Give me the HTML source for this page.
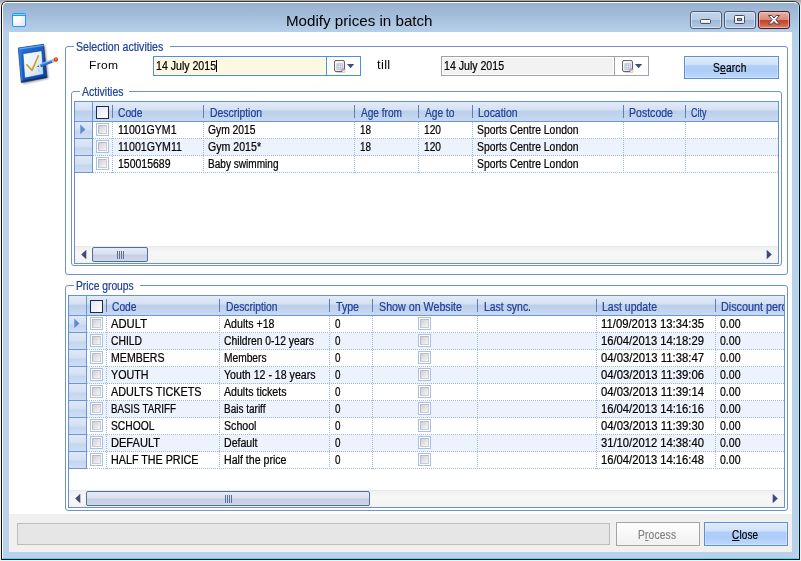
<!DOCTYPE html><html><head><meta charset="utf-8"><title>Modify prices in batch</title><style>
*,*:before,*:after{box-sizing:border-box;margin:0;padding:0}
html,body{width:801px;height:561px;overflow:hidden;background:#f2f2f2}
body{position:relative;font-family:"Liberation Sans",sans-serif;font-size:12px;color:#000}
.abs{position:absolute}
.t{position:absolute;white-space:nowrap;line-height:14px;transform-origin:0 0;display:block;-webkit-text-stroke:.22px currentColor}
#win{position:absolute;left:0;top:0;width:801px;height:561px;background:linear-gradient(#a9a9a9 0,#a9a9a9 1px,#f0f0f0 6px);overflow:hidden}
#frame{position:absolute;left:1px;top:1px;width:799px;height:559px;border:1px solid #101010;border-top-color:#33363c;border-radius:6px 6px 1px 1px;
 background:linear-gradient(#95b0d0 0px,#a5bedb 15px,#b7d0ea 31px,#b9d1ea 60px,#b9d1ea 100%);}
#frame2{position:absolute;left:2px;top:2px;width:797px;height:557px;border:1px solid #fff;border-right-color:#9be8f8;border-bottom-color:#3fdcfa;border-radius:5px 5px 1px 1px}
#client{position:absolute;left:9px;top:32px;width:783px;height:520px;background:#fff}
#bottom{position:absolute;left:0;top:482px;width:783px;height:38px;background:#f0f0f0}
.gb{position:absolute;border:1px solid #6b93cf;border-radius:3px}
.gbl{position:absolute;background:#fff;height:4px}
.grid{position:absolute;border:1px solid #6792d2;background:#fff;overflow:hidden}
.hdr{position:absolute;left:0;top:0;right:0;height:20px;background:linear-gradient(#e3ebf7 0%,#d4e0f2 42%,#bbcfea 48%,#c9d9f0 100%);border-bottom:1px solid #6b97d8}
.hdr i{position:absolute;top:3px;width:1px;height:13px;background:#5b7fc0}
.row{position:absolute;left:0;right:0;height:17px;border-bottom:1px dotted #9db8e2}
.row.alt{background:#edf3fc}
.ind{position:absolute;left:0;top:0;height:17px;background:linear-gradient(#dfe8f6 0%,#d5e1f3 45%,#c4d6ee 60%,#d0def2 100%);border-right:1px solid #6b97d8;border-bottom:1px solid #6b97d8}
.vl{position:absolute;width:0;border-left:1px dotted #9db8e2}
.cb{position:absolute;width:13px;height:13px;border:1px solid #a9c0e4;background:#fff;padding:0}
.cb:after{content:"";position:absolute;left:1px;top:1px;width:9px;height:9px;border:1px solid #b7bbc5;border-right-color:#c9ccd3;border-bottom-color:#c9ccd3;background:linear-gradient(135deg,#d0d1d5,#f6f6f6)}
.hcb{position:absolute;width:13px;height:13px;border:1px solid #1f2a44;background:linear-gradient(135deg,#dfe6f3,#fff)}
.sb{position:absolute;left:0;right:0;height:17px;background:linear-gradient(#f0f0f0 0%,#f7f7f7 40%,#f3f3f3 100%);border-top:1px solid #e6e9ef}
.thumb{position:absolute;top:0px;height:15px;border:1px solid #566d99;border-radius:2px;background:linear-gradient(#e6ebf5 0%,#d9e0ee 48%,#c5cfe2 52%,#cfd8e8 100%)}
.grip{position:absolute;top:3px;width:7px;height:8px;background:repeating-linear-gradient(90deg,#5b6f96 0 1px,transparent 1px 2px)}
.btn{position:absolute;border:1px solid #5f8fd5;box-shadow:inset 0 0 0 1px rgba(255,255,255,.28)}
</style></head><body><div id="win"><div id="frame"></div><div id="frame2"></div><div class="abs" style="left:12px;top:13px;width:14px;height:14px;border:1px solid #1c9cff;border-radius:2px;background:radial-gradient(circle at 25% 35%,#fff 0,#fff 20%,#e4deff 100%)"><div class="abs" style="left:0;top:0;width:12px;height:2px;background:#1c9cff;border-top:1px solid #8ed0ff"></div></div><span class="t" style="left:285.5px;top:11.5px;font-size:15px;transform:scaleX(1.010);line-height:18px;-webkit-text-stroke:0;">Modify prices in batch</span><div class="abs" style="left:690px;top:11px;width:32px;height:18px;border:1px solid #4f5c73;border-radius:3px;box-shadow:inset 0 0 0 1px rgba(225,235,247,.75);background:linear-gradient(#c3d4ea 0%,#b9cce6 47%,#9db6d7 50%,#b3c9e5 100%)"><div class="abs" style="left:9px;top:7px;width:11px;height:5px;border:1px solid #474c5e;background:linear-gradient(#fff,#e4e4e4);border-radius:1.5px"></div></div><div class="abs" style="left:724px;top:11px;width:32px;height:18px;border:1px solid #4f5c73;border-radius:3px;box-shadow:inset 0 0 0 1px rgba(225,235,247,.75);background:linear-gradient(#c3d4ea 0%,#b9cce6 47%,#9db6d7 50%,#b3c9e5 100%)"><div class="abs" style="left:9px;top:3px;width:11px;height:9px;border:1px solid #474c5e;background:linear-gradient(#fff,#e4e4e4);border-radius:1.5px"><div class="abs" style="left:2px;top:2px;width:5px;height:3px;border:1px solid #474c5e;background:#8fa9cf"></div></div></div><div class="abs" style="left:758px;top:11px;width:32px;height:18px;border:1px solid #4a1822;border-radius:3px;box-shadow:inset 0 0 0 1px rgba(255,220,210,.55);background:linear-gradient(#e9b0a3 0%,#dc8c7b 47%,#c0432a 50%,#c9533a 70%,#dc8268 100%)"><svg class="abs" style="left:8px;top:2px" width="14" height="12" viewBox="0 0 14 12"><path d="M1.5 1.5 L4.8 1.5 L7 4 L9.2 1.5 L12.5 1.5 L8.8 5.8 L12.5 10 L9.2 10 L7 7.5 L4.8 10 L1.5 10 L5.2 5.8 Z" fill="#fff" stroke="#4a4350" stroke-width="1" stroke-linejoin="round"/></svg></div><div id="client"><div id="bottom"></div></div><svg class="abs" style="left:10px;top:36px" width="60" height="56" viewBox="10 36 60 56">
<defs><linearGradient id="g1" x1="0" y1="0" x2="1" y2="1"><stop offset="0" stop-color="#2a78e0"/><stop offset=".45" stop-color="#1a5cc4"/><stop offset="1" stop-color="#0b3a92"/></linearGradient>
<linearGradient id="g2" x1="0" y1="0" x2="1" y2="1"><stop offset="0" stop-color="#ffffff"/><stop offset=".45" stop-color="#eaf3fd"/><stop offset="1" stop-color="#b5d5f5"/></linearGradient>
<linearGradient id="g3" x1="0" y1="0" x2="0" y2="1"><stop offset="0" stop-color="#b5d8fb"/><stop offset=".45" stop-color="#3f87e4"/><stop offset="1" stop-color="#1a4fae"/></linearGradient>
<filter id="bl" x="-30%" y="-30%" width="160%" height="160%"><feGaussianBlur stdDeviation="1.2"/></filter></defs>
<path d="M19.5 49 L45 45.5 L48.5 78.5 L23 84 Z" fill="#5e4f30" opacity=".6" filter="url(#bl)"/>
<path d="M18.3 48 L43.5 44.3 L47 77.6 L21.3 82.5 Z" fill="url(#g1)" stroke="#0b2f78" stroke-width=".7" stroke-linejoin="round"/>
<path d="M18.6 48.3 L43.4 44.7 L43.6 46 L19 49.7 Z" fill="#5aa6f2"/>
<path d="M18.6 48.3 L19.9 48.2 L22.8 82 L21.5 82.2 Z" fill="#3b8ae6" opacity=".8"/>
<path d="M46 76 L46.8 77.5 L21.4 82.3 L21.2 80.8 Z" fill="#09296a" opacity=".7"/>
<path d="M23 53.7 L41.8 50.7 L43.5 74.2 L24.7 78.1 Z" fill="url(#g2)" stroke="#0d3f98" stroke-width=".6"/>
<path d="M26.8 64.8 L32 70.4 L38.4 55.8" fill="none" stroke="#d59b1f" stroke-width="1.6" stroke-linecap="round" stroke-linejoin="round"/>
<path d="M38.2 68 L40 71.5 L38.6 71.8 Z" fill="#7cc4f7" opacity=".8"/>
<g transform="rotate(-20.7 37.5 66.5)">
<path d="M41 66.5 L58 66.5" stroke="#5e4f30" stroke-width="3.6" opacity=".4" filter="url(#bl)" transform="translate(.6,1.8)"/>
<rect x="40.3" y="64.8" width="13" height="3.5" fill="url(#g3)"/>
<rect x="53.1" y="64.8" width="2.1" height="3.5" fill="#d4d9e4"/>
<rect x="53.8" y="64.8" width=".6" height="3.5" fill="#8b94a8"/>
<ellipse cx="57.1" cy="66.5" rx="2.3" ry="2.2" fill="#e0461b"/>
<ellipse cx="57.4" cy="65.9" rx="1" ry=".8" fill="#f58a5c"/>
<path d="M40.3 64.8 L37.3 66.5 L40.3 68.3 Z" fill="#efe0bd"/>
<path d="M38.8 65.7 L37.1 66.5 L38.8 67.4 Z" fill="#2b2b2b"/>
</g>
</svg><div class="gb" style="left:65px;top:46px;width:723px;height:229px"></div><div class="gbl" style="left:74px;top:44px;width:96px"></div><span class="t" style="left:75.8px;top:40px;font-size:12px;color:#20409a;transform:scaleX(0.884);">Selection activities</span><span class="t" style="left:88.9px;top:58.4px;font-size:11px;transform:scaleX(1.091);letter-spacing:.3px;-webkit-text-stroke:0;">From</span><span class="t" style="left:377.2px;top:58px;font-size:12px;transform:scaleX(1.084);letter-spacing:.3px;-webkit-text-stroke:0;">till</span><div class="abs" style="left:153px;top:56px;width:208px;height:20px;border:1px solid #4a8fe0;background:#fff"><div class="abs" style="left:1px;top:1px;width:170px;height:16px;background:#fff8e1"></div><div class="abs" style="left:172px;top:0;width:1px;height:18px;background:#4a8fe0"></div><span class="t" style="left:2px;top:2px;font-size:12px;transform:scaleX(0.882);">14 July 2015</span><div class="abs" style="left:62px;top:3px;width:1px;height:12px;background:#000"></div><svg class="abs" style="left:179px;top:2px" width="26" height="15" viewBox="0 0 26 15"><defs><linearGradient id="cg" x1="0" y1="0" x2="1" y2="1"><stop offset="0" stop-color="#fff"/><stop offset="1" stop-color="#dcdcec"/></linearGradient></defs><path d="M3.5 13.3 L11.8 13.3 L11.8 4" stroke="#b9b4b4" stroke-width="1" fill="none" opacity=".7"/><path d="M2.5 1.5 H10 Q11.5 1.5 11.5 3 V10 L9 12.5 H3 Q1.5 12.5 1.5 11 V3 Q1.5 1.5 3 1.5 Z" fill="url(#cg)" stroke="#6e6162" stroke-width="1"/><path d="M9 12.5 V10.5 Q9 10 9.5 10 H11.5" fill="#f4f4fa" stroke="#6e6162" stroke-width=".8"/><rect x="3.6" y="4.5" width="6" height="6" fill="#a4aecb"/><path d="M4.3 5.2h1.2v1.2h-1.2zM6 5.2h1.2v1.2h-1.2zM7.7 5.2h1.2v1.2h-1.2zM4.3 6.9h1.2v1.2h-1.2zM6 6.9h1.2v1.2h-1.2zM7.7 6.9h1.2v1.2h-1.2zM4.3 8.6h1.2v1.2h-1.2zM6 8.6h1.2v1.2h-1.2zM7.7 8.6h1.2v1.2h-1.2z" fill="#f3f5fb"/><path d="M14 5 L21.2 5 L17.6 9.2 Z" fill="#3c4f7c"/></svg></div><div class="abs" style="left:441px;top:56px;width:208px;height:20px;border:1px solid #a0a1a6;background:#fff"><div class="abs" style="left:1px;top:1px;width:170px;height:16px;background:#f2f2f2"></div><div class="abs" style="left:172px;top:0;width:1px;height:18px;background:#a0a1a6"></div><span class="t" style="left:2px;top:2px;font-size:12px;transform:scaleX(0.882);">14 July 2015</span><svg class="abs" style="left:179px;top:2px" width="26" height="15" viewBox="0 0 26 15"><defs><linearGradient id="cg" x1="0" y1="0" x2="1" y2="1"><stop offset="0" stop-color="#fff"/><stop offset="1" stop-color="#dcdcec"/></linearGradient></defs><path d="M3.5 13.3 L11.8 13.3 L11.8 4" stroke="#b9b4b4" stroke-width="1" fill="none" opacity=".7"/><path d="M2.5 1.5 H10 Q11.5 1.5 11.5 3 V10 L9 12.5 H3 Q1.5 12.5 1.5 11 V3 Q1.5 1.5 3 1.5 Z" fill="url(#cg)" stroke="#6e6162" stroke-width="1"/><path d="M9 12.5 V10.5 Q9 10 9.5 10 H11.5" fill="#f4f4fa" stroke="#6e6162" stroke-width=".8"/><rect x="3.6" y="4.5" width="6" height="6" fill="#a4aecb"/><path d="M4.3 5.2h1.2v1.2h-1.2zM6 5.2h1.2v1.2h-1.2zM7.7 5.2h1.2v1.2h-1.2zM4.3 6.9h1.2v1.2h-1.2zM6 6.9h1.2v1.2h-1.2zM7.7 6.9h1.2v1.2h-1.2zM4.3 8.6h1.2v1.2h-1.2zM6 8.6h1.2v1.2h-1.2zM7.7 8.6h1.2v1.2h-1.2z" fill="#f3f5fb"/><path d="M14 5 L21.2 5 L17.6 9.2 Z" fill="#3c4f7c"/></svg></div><div class="btn" style="left:684px;top:56px;width:95px;height:23px;background:linear-gradient(#e0ebfc 0%,#d0e1fa 37%,#b0cef8 41%,#adccf8 65%,#bed9fc 100%)"><span class="t" style="left:28.4px;top:4px;font-size:12px;transform:scaleX(0.855);letter-spacing:.2px;">S<u>e</u>arch</span></div><div class="gb" style="left:71px;top:91px;width:711px;height:175px"></div><div class="gbl" style="left:80px;top:89px;width:49px"></div><span class="t" style="left:82px;top:85px;font-size:12px;color:#20409a;transform:scaleX(0.877);">Activities</span><div class="grid" style="left:74px;top:101px;width:705px;height:163px"><div class="hdr"><div class="abs" style="left:0;top:0;width:18px;height:19px;border-right:1px solid #6b97d8"></div><b class="hcb" style="left:21px;top:4px"></b><i style="left:37px"></i><span class="t" style="left:43px;top:4px;font-size:12px;color:#20409a;transform:scaleX(0.854);">Code</span><i style="left:128px"></i><span class="t" style="left:134.5px;top:4px;font-size:12px;color:#20409a;transform:scaleX(0.866);">Description</span><i style="left:279px"></i><span class="t" style="left:285.5px;top:4px;font-size:12px;color:#20409a;transform:scaleX(0.842);">Age from</span><i style="left:343px"></i><span class="t" style="left:349.5px;top:4px;font-size:12px;color:#20409a;transform:scaleX(0.850);">Age to</span><i style="left:397px"></i><span class="t" style="left:403.3px;top:4px;font-size:12px;color:#20409a;transform:scaleX(0.871);">Location</span><i style="left:548px"></i><span class="t" style="left:554px;top:4px;font-size:12px;color:#20409a;transform:scaleX(0.879);">Postcode</span><i style="left:610px"></i><span class="t" style="left:616px;top:4px;font-size:12px;color:#20409a;transform:scaleX(0.750);">City</span></div><div class="row" style="top:20px"><div class="ind" style="width:18px"></div><svg class="abs" style="left:5px;top:2px" width="6" height="11" viewBox="0 0 6 11"><path d="M0.3 0.6 L5.4 5.4 L0.3 10.2 Z" fill="#5b8cd6"/></svg><b class="cb" style="left:21px;top:1px"></b><span class="t" style="left:43px;top:1px;font-size:12px;transform:scaleX(0.880);">11001GYM1</span><span class="t" style="left:133px;top:1px;font-size:12px;transform:scaleX(0.858);">Gym 2015</span><span class="t" style="left:285px;top:1px;font-size:12px;transform:scaleX(0.823);">18</span><span class="t" style="left:349px;top:1px;font-size:12px;transform:scaleX(0.849);">120</span><span class="t" style="left:401.9px;top:1px;font-size:12px;transform:scaleX(0.864);">Sports Centre London</span></div><div class="row alt" style="top:37px"><div class="ind" style="width:18px"></div><b class="cb" style="left:21px;top:1px"></b><span class="t" style="left:43px;top:1px;font-size:12px;transform:scaleX(0.885);">11001GYM11</span><span class="t" style="left:133px;top:1px;font-size:12px;transform:scaleX(0.883);">Gym 2015*</span><span class="t" style="left:285px;top:1px;font-size:12px;transform:scaleX(0.823);">18</span><span class="t" style="left:349px;top:1px;font-size:12px;transform:scaleX(0.849);">120</span><span class="t" style="left:401.9px;top:1px;font-size:12px;transform:scaleX(0.864);">Sports Centre London</span></div><div class="row" style="top:54px"><div class="ind" style="width:18px"></div><b class="cb" style="left:21px;top:1px"></b><span class="t" style="left:43px;top:1px;font-size:12px;transform:scaleX(0.874);">150015689</span><span class="t" style="left:133px;top:1px;font-size:12px;transform:scaleX(0.839);">Baby swimming</span><span class="t" style="left:401.9px;top:1px;font-size:12px;transform:scaleX(0.864);">Sports Centre London</span></div><div class="vl" style="left:37px;top:20px;height:51px"></div><div class="vl" style="left:128px;top:20px;height:51px"></div><div class="vl" style="left:279px;top:20px;height:51px"></div><div class="vl" style="left:343px;top:20px;height:51px"></div><div class="vl" style="left:397px;top:20px;height:51px"></div><div class="vl" style="left:548px;top:20px;height:51px"></div><div class="vl" style="left:610px;top:20px;height:51px"></div><div class="sb" style="top:144px"><svg class="abs" style="left:6px;top:2px" width="6" height="11" viewBox="0 0 6 11"><path d="M5.3 0.8 L0.2 5.5 L5.3 10.2 Z" fill="#3a4c78"/></svg><svg class="abs" style="right:6px;top:2px" width="6" height="11" viewBox="0 0 6 11"><path d="M0.7 0.8 L5.8 5.5 L0.7 10.2 Z" fill="#3a4c78"/></svg><div class="thumb" style="left:17px;width:56px"><div class="grip" style="left:24px"></div></div></div></div><div class="gb" style="left:65px;top:285px;width:723px;height:226px"></div><div class="gbl" style="left:74px;top:283px;width:66px"></div><span class="t" style="left:76.3px;top:279.2px;font-size:12px;color:#20409a;transform:scaleX(0.856);">Price groups</span><div class="grid" style="left:68px;top:295px;width:717px;height:213px"><div class="hdr"><div class="abs" style="left:0;top:0;width:18px;height:19px;border-right:1px solid #6b97d8"></div><b class="hcb" style="left:21px;top:4px"></b><i style="left:37px"></i><span class="t" style="left:42.5px;top:4px;font-size:12px;color:#20409a;transform:scaleX(0.854);">Code</span><i style="left:150px"></i><span class="t" style="left:157px;top:4px;font-size:12px;color:#20409a;transform:scaleX(0.858);">Description</span><i style="left:260px"></i><span class="t" style="left:267px;top:4px;font-size:12px;color:#20409a;transform:scaleX(0.884);">Type</span><i style="left:303px"></i><span class="t" style="left:309.5px;top:4px;font-size:12px;color:#20409a;transform:scaleX(0.891);">Show on Website</span><i style="left:408px"></i><span class="t" style="left:414.5px;top:4px;font-size:12px;color:#20409a;transform:scaleX(0.870);">Last sync.</span><i style="left:527px"></i><span class="t" style="left:533px;top:4px;font-size:12px;color:#20409a;transform:scaleX(0.877);">Last update</span><i style="left:646px"></i><span class="t" style="left:652px;top:4px;font-size:12px;color:#20409a;transform:scaleX(0.899);">Discount perc</span></div><div class="row" style="top:20px"><div class="ind" style="width:18px"></div><svg class="abs" style="left:5px;top:2px" width="6" height="11" viewBox="0 0 6 11"><path d="M0.3 0.6 L5.4 5.4 L0.3 10.2 Z" fill="#5b8cd6"/></svg><b class="cb" style="left:21px;top:1px"></b><span class="t" style="left:42px;top:1px;font-size:12px;transform:scaleX(0.936);">ADULT</span><span class="t" style="left:155px;top:1px;font-size:12px;transform:scaleX(0.885);">Adults +18</span><span class="t" style="left:265.5px;top:1px;font-size:12px;transform:scaleX(0.822);">0</span><b class="cb" style="left:349px;top:1px"></b><span class="t" style="left:531.6px;top:1px;font-size:12px;transform:scaleX(0.943);">11/09/2013 13:34:35</span><span class="t" style="left:651px;top:1px;font-size:12px;transform:scaleX(0.878);">0.00</span></div><div class="row alt" style="top:37px"><div class="ind" style="width:18px"></div><b class="cb" style="left:21px;top:1px"></b><span class="t" style="left:42px;top:1px;font-size:12px;transform:scaleX(0.861);">CHILD</span><span class="t" style="left:155px;top:1px;font-size:12px;transform:scaleX(0.859);">Children 0-12 years</span><span class="t" style="left:265.5px;top:1px;font-size:12px;transform:scaleX(0.822);">0</span><b class="cb" style="left:349px;top:1px"></b><span class="t" style="left:531.6px;top:1px;font-size:12px;transform:scaleX(0.935);">16/04/2013 14:18:29</span><span class="t" style="left:651px;top:1px;font-size:12px;transform:scaleX(0.878);">0.00</span></div><div class="row" style="top:54px"><div class="ind" style="width:18px"></div><b class="cb" style="left:21px;top:1px"></b><span class="t" style="left:42px;top:1px;font-size:12px;transform:scaleX(0.882);">MEMBERS</span><span class="t" style="left:155px;top:1px;font-size:12px;transform:scaleX(0.850);">Members</span><span class="t" style="left:265.5px;top:1px;font-size:12px;transform:scaleX(0.822);">0</span><b class="cb" style="left:349px;top:1px"></b><span class="t" style="left:531.6px;top:1px;font-size:12px;transform:scaleX(0.943);">04/03/2013 11:38:47</span><span class="t" style="left:651px;top:1px;font-size:12px;transform:scaleX(0.878);">0.00</span></div><div class="row alt" style="top:71px"><div class="ind" style="width:18px"></div><b class="cb" style="left:21px;top:1px"></b><span class="t" style="left:42px;top:1px;font-size:12px;transform:scaleX(0.893);">YOUTH</span><span class="t" style="left:155px;top:1px;font-size:12px;transform:scaleX(0.883);">Youth 12 - 18 years</span><span class="t" style="left:265.5px;top:1px;font-size:12px;transform:scaleX(0.822);">0</span><b class="cb" style="left:349px;top:1px"></b><span class="t" style="left:531.6px;top:1px;font-size:12px;transform:scaleX(0.943);">04/03/2013 11:39:06</span><span class="t" style="left:651px;top:1px;font-size:12px;transform:scaleX(0.878);">0.00</span></div><div class="row" style="top:88px"><div class="ind" style="width:18px"></div><b class="cb" style="left:21px;top:1px"></b><span class="t" style="left:42px;top:1px;font-size:12px;transform:scaleX(0.903);">ADULTS TICKETS</span><span class="t" style="left:155px;top:1px;font-size:12px;transform:scaleX(0.884);">Adults tickets</span><span class="t" style="left:265.5px;top:1px;font-size:12px;transform:scaleX(0.822);">0</span><b class="cb" style="left:349px;top:1px"></b><span class="t" style="left:531.6px;top:1px;font-size:12px;transform:scaleX(0.943);">04/03/2013 11:39:14</span><span class="t" style="left:651px;top:1px;font-size:12px;transform:scaleX(0.878);">0.00</span></div><div class="row alt" style="top:105px"><div class="ind" style="width:18px"></div><b class="cb" style="left:21px;top:1px"></b><span class="t" style="left:42px;top:1px;font-size:12px;transform:scaleX(0.817);">BASIS TARIFF</span><span class="t" style="left:155px;top:1px;font-size:12px;transform:scaleX(0.833);">Bais tariff</span><span class="t" style="left:265.5px;top:1px;font-size:12px;transform:scaleX(0.822);">0</span><b class="cb" style="left:349px;top:1px"></b><span class="t" style="left:531.6px;top:1px;font-size:12px;transform:scaleX(0.935);">16/04/2013 14:16:16</span><span class="t" style="left:651px;top:1px;font-size:12px;transform:scaleX(0.878);">0.00</span></div><div class="row" style="top:122px"><div class="ind" style="width:18px"></div><b class="cb" style="left:21px;top:1px"></b><span class="t" style="left:42px;top:1px;font-size:12px;transform:scaleX(0.858);">SCHOOL</span><span class="t" style="left:155px;top:1px;font-size:12px;transform:scaleX(0.885);">School</span><span class="t" style="left:265.5px;top:1px;font-size:12px;transform:scaleX(0.822);">0</span><b class="cb" style="left:349px;top:1px"></b><span class="t" style="left:531.6px;top:1px;font-size:12px;transform:scaleX(0.943);">04/03/2013 11:39:30</span><span class="t" style="left:651px;top:1px;font-size:12px;transform:scaleX(0.878);">0.00</span></div><div class="row alt" style="top:139px"><div class="ind" style="width:18px"></div><b class="cb" style="left:21px;top:1px"></b><span class="t" style="left:42px;top:1px;font-size:12px;transform:scaleX(0.922);">DEFAULT</span><span class="t" style="left:155px;top:1px;font-size:12px;transform:scaleX(0.881);">Default</span><span class="t" style="left:265.5px;top:1px;font-size:12px;transform:scaleX(0.822);">0</span><b class="cb" style="left:349px;top:1px"></b><span class="t" style="left:531.6px;top:1px;font-size:12px;transform:scaleX(0.935);">31/10/2012 14:38:40</span><span class="t" style="left:651px;top:1px;font-size:12px;transform:scaleX(0.878);">0.00</span></div><div class="row" style="top:156px"><div class="ind" style="width:18px"></div><b class="cb" style="left:21px;top:1px"></b><span class="t" style="left:42px;top:1px;font-size:12px;transform:scaleX(0.895);">HALF THE PRICE</span><span class="t" style="left:155px;top:1px;font-size:12px;transform:scaleX(0.884);">Half the price</span><span class="t" style="left:265.5px;top:1px;font-size:12px;transform:scaleX(0.822);">0</span><b class="cb" style="left:349px;top:1px"></b><span class="t" style="left:531.6px;top:1px;font-size:12px;transform:scaleX(0.935);">16/04/2013 14:16:48</span><span class="t" style="left:651px;top:1px;font-size:12px;transform:scaleX(0.878);">0.00</span></div><div class="vl" style="left:37px;top:20px;height:153px"></div><div class="vl" style="left:150px;top:20px;height:153px"></div><div class="vl" style="left:260px;top:20px;height:153px"></div><div class="vl" style="left:303px;top:20px;height:153px"></div><div class="vl" style="left:408px;top:20px;height:153px"></div><div class="vl" style="left:527px;top:20px;height:153px"></div><div class="vl" style="left:646px;top:20px;height:153px"></div><div class="sb" style="top:194px"><svg class="abs" style="left:6px;top:2px" width="6" height="11" viewBox="0 0 6 11"><path d="M5.3 0.8 L0.2 5.5 L5.3 10.2 Z" fill="#3a4c78"/></svg><svg class="abs" style="right:6px;top:2px" width="6" height="11" viewBox="0 0 6 11"><path d="M0.7 0.8 L5.8 5.5 L0.7 10.2 Z" fill="#3a4c78"/></svg><div class="thumb" style="left:17px;width:284px"><div class="grip" style="left:138px"></div></div></div></div><div class="abs" style="left:17px;top:523px;width:593px;height:22px;border:1px solid #bcbcbc;background:#e6e6e6"></div><div class="btn" style="left:616px;top:522px;width:84px;height:24px;border-color:#a3a3a3;background:linear-gradient(#fefefe 0%,#f8f8f8 45%,#f0f0f0 100%)"><span class="t" style="left:21px;top:5px;font-size:12px;color:#838383;transform:scaleX(0.853);letter-spacing:.2px;">P<u>r</u>ocess</span></div><div class="btn" style="left:704px;top:522px;width:84px;height:24px;background:linear-gradient(#e0ebfc 0%,#d0e1fa 37%,#b0cef8 41%,#adccf8 65%,#bed9fc 100%)"><span class="t" style="left:27px;top:5px;font-size:12px;transform:scaleX(0.831);letter-spacing:.2px;"><u>C</u>lose</span></div></div></body></html>
